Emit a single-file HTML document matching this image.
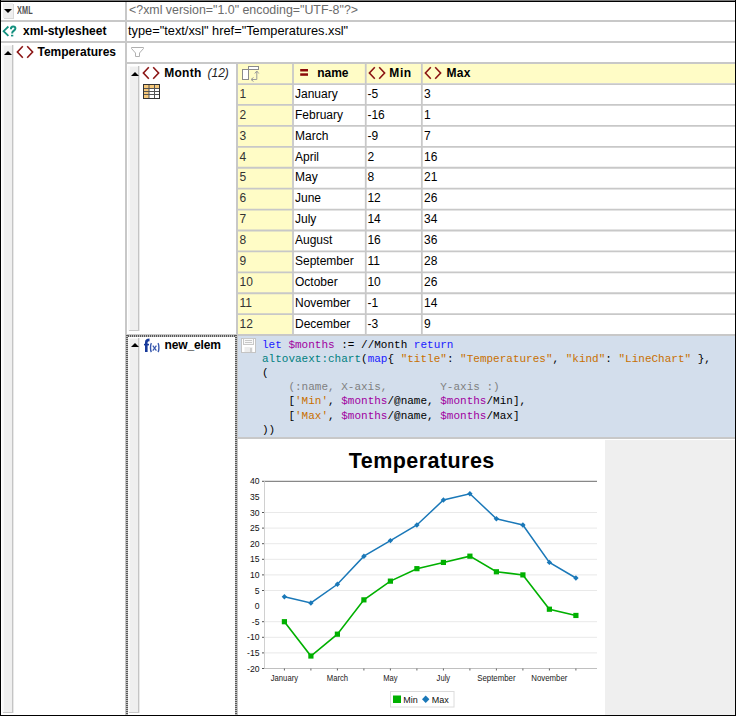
<!DOCTYPE html>
<html><head><meta charset="utf-8"><style>
html,body{margin:0;padding:0;}
body{width:736px;height:716px;position:relative;overflow:hidden;background:#fff;font-family:"Liberation Sans", sans-serif;}
body>div,body>svg{position:absolute;}
</style></head><body>
<div style="left:0px;top:0px;width:736px;height:1px;background:#7a7a7a;"></div>
<div style="left:0px;top:1px;width:736px;height:1px;background:#000;"></div>
<div style="left:0px;top:0px;width:1px;height:716px;background:#000;"></div>
<div style="left:735px;top:0px;width:1px;height:716px;background:#000;"></div>
<div style="left:0px;top:715px;width:736px;height:1px;background:#000;"></div>
<div style="left:1px;top:20px;width:734px;height:2px;background:#c8c8c8;"></div>
<div style="left:1px;top:41px;width:734px;height:2px;background:#c8c8c8;"></div>
<div style="left:125px;top:2px;width:2px;height:713px;background:#c8c8c8;"></div>
<div style="left:3px;top:3px;width:10px;height:15px;background:#efefef;box-shadow:1px 1px 0 #d9d9d9"></div>
<div style="left:4px;top:9px;width:0;height:0;border-left:4px solid transparent;border-right:4px solid transparent;border-top:4px solid #000"></div>
<div style="left:17px;top:0.19px;line-height:20px;font-size:11px;font-weight:bold;font-style:normal;color:#505050;font-family:'Liberation Sans', sans-serif;letter-spacing:0.2px;white-space:pre;transform:scaleX(0.66);transform-origin:0 0">XML</div>
<div style="left:129px;top:-0.30px;line-height:20px;font-size:12.4px;font-weight:normal;font-style:normal;color:#6b6b6b;font-family:'Liberation Sans', sans-serif;letter-spacing:0px;white-space:pre;">&lt;?xml version="1.0" encoding="UTF-8"?&gt;</div>
<svg style="left:0;top:22px" width="20" height="18" viewBox="0 0 20 18"><path d="M8.4 4.5 L3.6 9.2 L8.4 13.8" fill="none" stroke="#15907f" stroke-width="1.8"/><path d="M10.9 7.2 C10.9 5.3 12 4.5 13.1 4.5 C14.5 4.5 15.4 5.4 15.4 6.6 C15.4 8.4 12.2 8.8 12.2 10.9 V11.6" fill="none" stroke="#15907f" stroke-width="2"/><rect x="11" y="12.8" width="2.3" height="1.6" fill="#15907f"/></svg>
<div style="left:23px;top:20.84px;line-height:20px;font-size:12px;font-weight:bold;font-style:normal;color:#000;font-family:'Liberation Sans', sans-serif;letter-spacing:0px;white-space:pre;">xml-stylesheet</div>
<div style="left:128px;top:20.96px;line-height:20px;font-size:12.8px;font-weight:normal;font-style:normal;color:#000;font-family:'Liberation Sans', sans-serif;letter-spacing:0px;white-space:pre;">type="text/xsl" href="Temperatures.xsl"</div>
<div style="left:2px;top:45px;width:12px;height:668px;background:linear-gradient(to right,#f8f8f8 0 2px,#efefef 2px 10px,#c4c4c4 10px 11px,#e9e9e9 11px)"></div>
<div style="left:3px;top:712px;width:10px;height:1px;background:#c8c8c8"></div>
<div style="left:2px;top:45px;width:10px;height:1px;background:#f8f8f8"></div>
<div style="left:4px;top:51px;width:0;height:0;border-left:4.0px solid transparent;border-right:4.0px solid transparent;border-bottom:4px solid #000"></div>
<svg style="left:16px;top:44.8px" width="18" height="14" viewBox="0 0 18 14"><path d="M6.8 1.3 L1.4 7 L6.8 12.7 M11.2 1.3 L16.6 7 L11.2 12.7" fill="none" stroke="#8b1414" stroke-width="1.6"/></svg>
<div style="left:37.5px;top:41.84px;line-height:20px;font-size:12px;font-weight:bold;font-style:normal;color:#000;font-family:'Liberation Sans', sans-serif;letter-spacing:0px;white-space:pre;">Temperatures</div>
<svg style="left:130px;top:46px" width="15" height="12" viewBox="0 0 15 12"><path d="M1.5 1.5 H13.5 V2.5 L9.5 7 V10.5 H5.5 V7 L1.5 2.5 Z" fill="#fff" stroke="#b0b0b0" stroke-width="1"/></svg>
<div style="left:127px;top:62px;width:608px;height:2px;background:#c8c8c8;"></div>
<div style="left:128px;top:66px;width:12px;height:265px;background:linear-gradient(to right,#f8f8f8 0 2px,#efefef 2px 10px,#c4c4c4 10px 11px,#e9e9e9 11px)"></div>
<div style="left:129px;top:330px;width:10px;height:1px;background:#c8c8c8"></div>
<div style="left:128px;top:66px;width:10px;height:1px;background:#f8f8f8"></div>
<div style="left:130.5px;top:71.5px;width:0;height:0;border-left:4.0px solid transparent;border-right:4.0px solid transparent;border-bottom:4.5px solid #000"></div>
<svg style="left:142px;top:66px" width="18" height="14" viewBox="0 0 18 14"><path d="M6.8 1.3 L1.4 7 L6.8 12.7 M11.2 1.3 L16.6 7 L11.2 12.7" fill="none" stroke="#8b1414" stroke-width="1.6"/></svg>
<div style="left:164.2px;top:62.84px;line-height:20px;font-size:12px;font-weight:bold;font-style:normal;color:#000;font-family:'Liberation Sans', sans-serif;letter-spacing:0.3px;white-space:pre;">Month</div>
<div style="left:207.5px;top:62.84px;line-height:20px;font-size:12px;font-weight:normal;font-style:italic;color:#222;font-family:'Liberation Sans', sans-serif;letter-spacing:0px;white-space:pre;">(12)</div>
<svg style="left:143px;top:84px" width="18" height="15" viewBox="0 0 18 15"><rect x="0.5" y="0.5" width="16" height="14" fill="#fff" stroke="#333"/><rect x="1" y="1" width="16" height="3" fill="#f6c87a"/><rect x="1" y="4" width="5" height="10" fill="#f6c87a"/><path d="M0.5 4.5H16.5M0.5 7.5H16.5M0.5 10.5H16.5M6 0.5V14.5M11.5 0.5V14.5" stroke="#555" stroke-width="1"/><rect x="0.5" y="0.5" width="16" height="14" fill="none" stroke="#333"/></svg>
<div style="left:236px;top:63px;width:2px;height:652px;background:#c8c8c8;"></div>
<div style="left:238px;top:64px;width:497px;height:19px;background:#fffcc6;"></div>
<div style="left:238px;top:64px;width:54px;height:271px;background:#fffcc6;"></div>
<svg style="left:0;top:0" width="736" height="716" viewBox="0 0 736 716"><line x1="238" y1="84.05" x2="735" y2="84.05" stroke="#c8c8c8" stroke-width="1.8"/><line x1="238" y1="104.97" x2="735" y2="104.97" stroke="#c8c8c8" stroke-width="1.8"/><line x1="238" y1="125.89" x2="735" y2="125.89" stroke="#c8c8c8" stroke-width="1.8"/><line x1="238" y1="146.81" x2="735" y2="146.81" stroke="#c8c8c8" stroke-width="1.8"/><line x1="238" y1="167.73" x2="735" y2="167.73" stroke="#c8c8c8" stroke-width="1.8"/><line x1="238" y1="188.65" x2="735" y2="188.65" stroke="#c8c8c8" stroke-width="1.8"/><line x1="238" y1="209.57" x2="735" y2="209.57" stroke="#c8c8c8" stroke-width="1.8"/><line x1="238" y1="230.49" x2="735" y2="230.49" stroke="#c8c8c8" stroke-width="1.8"/><line x1="238" y1="251.41" x2="735" y2="251.41" stroke="#c8c8c8" stroke-width="1.8"/><line x1="238" y1="272.33" x2="735" y2="272.33" stroke="#c8c8c8" stroke-width="1.8"/><line x1="238" y1="293.25" x2="735" y2="293.25" stroke="#c8c8c8" stroke-width="1.8"/><line x1="238" y1="314.17" x2="735" y2="314.17" stroke="#c8c8c8" stroke-width="1.8"/><line x1="238" y1="335.09" x2="735" y2="335.09" stroke="#c8c8c8" stroke-width="1.8"/><line x1="293.0" y1="63" x2="293.0" y2="335.09" stroke="#c8c8c8" stroke-width="1.8"/><line x1="365.75" y1="63" x2="365.75" y2="335.09" stroke="#c8c8c8" stroke-width="1.8"/><line x1="421.85" y1="63" x2="421.85" y2="335.09" stroke="#c8c8c8" stroke-width="1.8"/></svg>
<svg style="left:241px;top:65px" width="20" height="18" viewBox="0 0 20 18"><rect x="1.5" y="4.5" width="6" height="10" fill="#fff" stroke="#8a8a8a"/><rect x="7.5" y="1.5" width="10" height="3" fill="#fff" stroke="#8a8a8a"/><path d="M15.8 6.5 V14.5 H10.5" fill="none" stroke="#9a9a9a"/><path d="M13.8 8.5 L15.8 6 L17.8 8.5 M12.5 12.5 L10 14.5 L12.5 16.5" fill="none" stroke="#9a9a9a"/></svg>
<svg style="left:298px;top:66px" width="12" height="12" viewBox="0 0 12 12"><rect x="2.2" y="3" width="7.8" height="2.5" fill="#8b0a0a"/><rect x="2.2" y="7.3" width="7.8" height="2.5" fill="#8b0a0a"/></svg>
<div style="left:317.2px;top:62.84px;line-height:20px;font-size:12px;font-weight:bold;font-style:normal;color:#000;font-family:'Liberation Sans', sans-serif;letter-spacing:0px;white-space:pre;">name</div>
<svg style="left:367.5px;top:66px" width="18" height="14" viewBox="0 0 18 14"><path d="M6.8 1.3 L1.4 7 L6.8 12.7 M11.2 1.3 L16.6 7 L11.2 12.7" fill="none" stroke="#8b1414" stroke-width="1.6"/></svg>
<div style="left:389.3px;top:62.84px;line-height:20px;font-size:12px;font-weight:bold;font-style:normal;color:#000;font-family:'Liberation Sans', sans-serif;letter-spacing:0.6px;white-space:pre;">Min</div>
<svg style="left:423.5px;top:66px" width="18" height="14" viewBox="0 0 18 14"><path d="M6.8 1.3 L1.4 7 L6.8 12.7 M11.2 1.3 L16.6 7 L11.2 12.7" fill="none" stroke="#8b1414" stroke-width="1.6"/></svg>
<div style="left:446.4px;top:62.84px;line-height:20px;font-size:12px;font-weight:bold;font-style:normal;color:#000;font-family:'Liberation Sans', sans-serif;letter-spacing:0.4px;white-space:pre;">Max</div>
<div style="left:239.5px;top:83.74px;line-height:20px;font-size:12px;font-weight:normal;font-style:normal;color:#333;font-family:'Liberation Sans', sans-serif;letter-spacing:0px;white-space:pre;">1</div>
<div style="left:295px;top:83.74px;line-height:20px;font-size:12px;font-weight:normal;font-style:normal;color:#000;font-family:'Liberation Sans', sans-serif;letter-spacing:0px;white-space:pre;">January</div>
<div style="left:367.4px;top:83.74px;line-height:20px;font-size:12px;font-weight:normal;font-style:normal;color:#000;font-family:'Liberation Sans', sans-serif;letter-spacing:0px;white-space:pre;">-5</div>
<div style="left:424px;top:83.74px;line-height:20px;font-size:12px;font-weight:normal;font-style:normal;color:#000;font-family:'Liberation Sans', sans-serif;letter-spacing:0px;white-space:pre;">3</div>
<div style="left:239.5px;top:104.66px;line-height:20px;font-size:12px;font-weight:normal;font-style:normal;color:#333;font-family:'Liberation Sans', sans-serif;letter-spacing:0px;white-space:pre;">2</div>
<div style="left:295px;top:104.66px;line-height:20px;font-size:12px;font-weight:normal;font-style:normal;color:#000;font-family:'Liberation Sans', sans-serif;letter-spacing:0px;white-space:pre;">February</div>
<div style="left:367.4px;top:104.66px;line-height:20px;font-size:12px;font-weight:normal;font-style:normal;color:#000;font-family:'Liberation Sans', sans-serif;letter-spacing:0px;white-space:pre;">-16</div>
<div style="left:424px;top:104.66px;line-height:20px;font-size:12px;font-weight:normal;font-style:normal;color:#000;font-family:'Liberation Sans', sans-serif;letter-spacing:0px;white-space:pre;">1</div>
<div style="left:239.5px;top:125.58px;line-height:20px;font-size:12px;font-weight:normal;font-style:normal;color:#333;font-family:'Liberation Sans', sans-serif;letter-spacing:0px;white-space:pre;">3</div>
<div style="left:295px;top:125.58px;line-height:20px;font-size:12px;font-weight:normal;font-style:normal;color:#000;font-family:'Liberation Sans', sans-serif;letter-spacing:0px;white-space:pre;">March</div>
<div style="left:367.4px;top:125.58px;line-height:20px;font-size:12px;font-weight:normal;font-style:normal;color:#000;font-family:'Liberation Sans', sans-serif;letter-spacing:0px;white-space:pre;">-9</div>
<div style="left:424px;top:125.58px;line-height:20px;font-size:12px;font-weight:normal;font-style:normal;color:#000;font-family:'Liberation Sans', sans-serif;letter-spacing:0px;white-space:pre;">7</div>
<div style="left:239.5px;top:146.50px;line-height:20px;font-size:12px;font-weight:normal;font-style:normal;color:#333;font-family:'Liberation Sans', sans-serif;letter-spacing:0px;white-space:pre;">4</div>
<div style="left:295px;top:146.50px;line-height:20px;font-size:12px;font-weight:normal;font-style:normal;color:#000;font-family:'Liberation Sans', sans-serif;letter-spacing:0px;white-space:pre;">April</div>
<div style="left:367.4px;top:146.50px;line-height:20px;font-size:12px;font-weight:normal;font-style:normal;color:#000;font-family:'Liberation Sans', sans-serif;letter-spacing:0px;white-space:pre;">2</div>
<div style="left:424px;top:146.50px;line-height:20px;font-size:12px;font-weight:normal;font-style:normal;color:#000;font-family:'Liberation Sans', sans-serif;letter-spacing:0px;white-space:pre;">16</div>
<div style="left:239.5px;top:167.42px;line-height:20px;font-size:12px;font-weight:normal;font-style:normal;color:#333;font-family:'Liberation Sans', sans-serif;letter-spacing:0px;white-space:pre;">5</div>
<div style="left:295px;top:167.42px;line-height:20px;font-size:12px;font-weight:normal;font-style:normal;color:#000;font-family:'Liberation Sans', sans-serif;letter-spacing:0px;white-space:pre;">May</div>
<div style="left:367.4px;top:167.42px;line-height:20px;font-size:12px;font-weight:normal;font-style:normal;color:#000;font-family:'Liberation Sans', sans-serif;letter-spacing:0px;white-space:pre;">8</div>
<div style="left:424px;top:167.42px;line-height:20px;font-size:12px;font-weight:normal;font-style:normal;color:#000;font-family:'Liberation Sans', sans-serif;letter-spacing:0px;white-space:pre;">21</div>
<div style="left:239.5px;top:188.34px;line-height:20px;font-size:12px;font-weight:normal;font-style:normal;color:#333;font-family:'Liberation Sans', sans-serif;letter-spacing:0px;white-space:pre;">6</div>
<div style="left:295px;top:188.34px;line-height:20px;font-size:12px;font-weight:normal;font-style:normal;color:#000;font-family:'Liberation Sans', sans-serif;letter-spacing:0px;white-space:pre;">June</div>
<div style="left:367.4px;top:188.34px;line-height:20px;font-size:12px;font-weight:normal;font-style:normal;color:#000;font-family:'Liberation Sans', sans-serif;letter-spacing:0px;white-space:pre;">12</div>
<div style="left:424px;top:188.34px;line-height:20px;font-size:12px;font-weight:normal;font-style:normal;color:#000;font-family:'Liberation Sans', sans-serif;letter-spacing:0px;white-space:pre;">26</div>
<div style="left:239.5px;top:209.26px;line-height:20px;font-size:12px;font-weight:normal;font-style:normal;color:#333;font-family:'Liberation Sans', sans-serif;letter-spacing:0px;white-space:pre;">7</div>
<div style="left:295px;top:209.26px;line-height:20px;font-size:12px;font-weight:normal;font-style:normal;color:#000;font-family:'Liberation Sans', sans-serif;letter-spacing:0px;white-space:pre;">July</div>
<div style="left:367.4px;top:209.26px;line-height:20px;font-size:12px;font-weight:normal;font-style:normal;color:#000;font-family:'Liberation Sans', sans-serif;letter-spacing:0px;white-space:pre;">14</div>
<div style="left:424px;top:209.26px;line-height:20px;font-size:12px;font-weight:normal;font-style:normal;color:#000;font-family:'Liberation Sans', sans-serif;letter-spacing:0px;white-space:pre;">34</div>
<div style="left:239.5px;top:230.18px;line-height:20px;font-size:12px;font-weight:normal;font-style:normal;color:#333;font-family:'Liberation Sans', sans-serif;letter-spacing:0px;white-space:pre;">8</div>
<div style="left:295px;top:230.18px;line-height:20px;font-size:12px;font-weight:normal;font-style:normal;color:#000;font-family:'Liberation Sans', sans-serif;letter-spacing:0px;white-space:pre;">August</div>
<div style="left:367.4px;top:230.18px;line-height:20px;font-size:12px;font-weight:normal;font-style:normal;color:#000;font-family:'Liberation Sans', sans-serif;letter-spacing:0px;white-space:pre;">16</div>
<div style="left:424px;top:230.18px;line-height:20px;font-size:12px;font-weight:normal;font-style:normal;color:#000;font-family:'Liberation Sans', sans-serif;letter-spacing:0px;white-space:pre;">36</div>
<div style="left:239.5px;top:251.10px;line-height:20px;font-size:12px;font-weight:normal;font-style:normal;color:#333;font-family:'Liberation Sans', sans-serif;letter-spacing:0px;white-space:pre;">9</div>
<div style="left:295px;top:251.10px;line-height:20px;font-size:12px;font-weight:normal;font-style:normal;color:#000;font-family:'Liberation Sans', sans-serif;letter-spacing:0px;white-space:pre;">September</div>
<div style="left:367.4px;top:251.10px;line-height:20px;font-size:12px;font-weight:normal;font-style:normal;color:#000;font-family:'Liberation Sans', sans-serif;letter-spacing:0px;white-space:pre;">11</div>
<div style="left:424px;top:251.10px;line-height:20px;font-size:12px;font-weight:normal;font-style:normal;color:#000;font-family:'Liberation Sans', sans-serif;letter-spacing:0px;white-space:pre;">28</div>
<div style="left:239.5px;top:272.02px;line-height:20px;font-size:12px;font-weight:normal;font-style:normal;color:#333;font-family:'Liberation Sans', sans-serif;letter-spacing:0px;white-space:pre;">10</div>
<div style="left:295px;top:272.02px;line-height:20px;font-size:12px;font-weight:normal;font-style:normal;color:#000;font-family:'Liberation Sans', sans-serif;letter-spacing:0px;white-space:pre;">October</div>
<div style="left:367.4px;top:272.02px;line-height:20px;font-size:12px;font-weight:normal;font-style:normal;color:#000;font-family:'Liberation Sans', sans-serif;letter-spacing:0px;white-space:pre;">10</div>
<div style="left:424px;top:272.02px;line-height:20px;font-size:12px;font-weight:normal;font-style:normal;color:#000;font-family:'Liberation Sans', sans-serif;letter-spacing:0px;white-space:pre;">26</div>
<div style="left:239.5px;top:292.94px;line-height:20px;font-size:12px;font-weight:normal;font-style:normal;color:#333;font-family:'Liberation Sans', sans-serif;letter-spacing:0px;white-space:pre;">11</div>
<div style="left:295px;top:292.94px;line-height:20px;font-size:12px;font-weight:normal;font-style:normal;color:#000;font-family:'Liberation Sans', sans-serif;letter-spacing:0px;white-space:pre;">November</div>
<div style="left:367.4px;top:292.94px;line-height:20px;font-size:12px;font-weight:normal;font-style:normal;color:#000;font-family:'Liberation Sans', sans-serif;letter-spacing:0px;white-space:pre;">-1</div>
<div style="left:424px;top:292.94px;line-height:20px;font-size:12px;font-weight:normal;font-style:normal;color:#000;font-family:'Liberation Sans', sans-serif;letter-spacing:0px;white-space:pre;">14</div>
<div style="left:239.5px;top:313.86px;line-height:20px;font-size:12px;font-weight:normal;font-style:normal;color:#333;font-family:'Liberation Sans', sans-serif;letter-spacing:0px;white-space:pre;">12</div>
<div style="left:295px;top:313.86px;line-height:20px;font-size:12px;font-weight:normal;font-style:normal;color:#000;font-family:'Liberation Sans', sans-serif;letter-spacing:0px;white-space:pre;">December</div>
<div style="left:367.4px;top:313.86px;line-height:20px;font-size:12px;font-weight:normal;font-style:normal;color:#000;font-family:'Liberation Sans', sans-serif;letter-spacing:0px;white-space:pre;">-3</div>
<div style="left:424px;top:313.86px;line-height:20px;font-size:12px;font-weight:normal;font-style:normal;color:#000;font-family:'Liberation Sans', sans-serif;letter-spacing:0px;white-space:pre;">9</div>
<div style="left:127px;top:334px;width:608px;height:2px;background:#c8c8c8;"></div>
<div style="left:126px;top:335px;width:111px;height:2px;background:repeating-linear-gradient(to right,#5a5a5a 0 1px,#bdbdbd 1px 2px);"></div>
<div style="left:126px;top:335px;width:2px;height:380px;background:repeating-linear-gradient(to bottom,#5a5a5a 0 1px,#bdbdbd 1px 2px);"></div>
<div style="left:235px;top:335px;width:2px;height:380px;background:repeating-linear-gradient(to bottom,#5a5a5a 0 1px,#bdbdbd 1px 2px);"></div>
<div style="left:128px;top:338px;width:12px;height:375px;background:linear-gradient(to right,#f8f8f8 0 2px,#efefef 2px 10px,#c4c4c4 10px 11px,#e9e9e9 11px)"></div>
<div style="left:129px;top:712px;width:10px;height:1px;background:#c8c8c8"></div>
<div style="left:128px;top:338px;width:10px;height:1px;background:#f8f8f8"></div>
<div style="left:130.5px;top:342.8px;width:0;height:0;border-left:4.0px solid transparent;border-right:4.0px solid transparent;border-bottom:4.5px solid #000"></div>
<svg style="left:140px;top:336px" width="24" height="20" viewBox="0 0 24 20"><path d="M6.3 16 V6.2 C6.3 4.6 7.2 3.9 9.5 3.9" fill="none" stroke="#17399a" stroke-width="2.6"/><path d="M4 8.6 H9" stroke="#17399a" stroke-width="1.6"/><path d="M11.4 7.2 C10.2 9 10.2 14.3 11.4 16" fill="none" stroke="#3556ad" stroke-width="1.4"/><path d="M18 7.2 C19.2 9 19.2 14.3 18 16" fill="none" stroke="#3556ad" stroke-width="1.4"/><path d="M12.8 9.6 L16.4 14.6 M16.4 9.6 L12.8 14.6" stroke="#3556ad" stroke-width="1.2"/></svg>
<div style="left:164.6px;top:335.44px;line-height:20px;font-size:12px;font-weight:bold;font-style:normal;color:#000;font-family:'Liberation Sans', sans-serif;letter-spacing:-0.15px;white-space:pre;">new_elem</div>
<div style="left:238px;top:336px;width:497px;height:101px;background:#d3deec;"></div>
<div style="left:238px;top:437px;width:497px;height:2px;background:#c8c8c8;"></div>
<svg style="left:240px;top:337px" width="18" height="17" viewBox="0 0 18 17"><rect x="1.5" y="1.5" width="14" height="14" fill="#fff" stroke="#c4c4c4"/><rect x="3.5" y="1.5" width="10" height="6" fill="#f8f8f8" stroke="#c8c8c8"/><path d="M5 3.5H12M5 5.5H12" stroke="#c8c8c8"/><rect x="4.5" y="10" width="8" height="5" fill="#ececec"/><rect x="10" y="11" width="2" height="4" fill="#cfcfcf"/></svg>
<div style="left:262px;top:337.67px;line-height:14px;font-size:11px;font-family:'Liberation Mono', monospace;white-space:pre"><span style="color:#1a1aff">let</span><span style="color:#000"> </span><span style="color:#a000a0">$months</span><span style="color:#000"> := //Month </span><span style="color:#1a1aff">return</span></div>
<div style="left:262px;top:351.85px;line-height:14px;font-size:11px;font-family:'Liberation Mono', monospace;white-space:pre"><span style="color:#008080">altovaext:chart</span><span style="color:#000">(</span><span style="color:#1a1aff">map</span><span style="color:#000">{ </span><span style="color:#c87000">"title"</span><span style="color:#000">: </span><span style="color:#c87000">"Temperatures"</span><span style="color:#000">, </span><span style="color:#c87000">"kind"</span><span style="color:#000">: </span><span style="color:#c87000">"LineChart"</span><span style="color:#000"> },</span></div>
<div style="left:262px;top:366.03px;line-height:14px;font-size:11px;font-family:'Liberation Mono', monospace;white-space:pre"><span style="color:#000">(</span></div>
<div style="left:262px;top:380.21px;line-height:14px;font-size:11px;font-family:'Liberation Mono', monospace;white-space:pre"><span style="color:#808080">    (:name, X-axis,        Y-axis :)</span></div>
<div style="left:262px;top:394.39px;line-height:14px;font-size:11px;font-family:'Liberation Mono', monospace;white-space:pre"><span style="color:#000">    [</span><span style="color:#c87000">'Min'</span><span style="color:#000">, </span><span style="color:#a000a0">$months</span><span style="color:#000">/@name, </span><span style="color:#a000a0">$months</span><span style="color:#000">/Min],</span></div>
<div style="left:262px;top:408.57px;line-height:14px;font-size:11px;font-family:'Liberation Mono', monospace;white-space:pre"><span style="color:#000">    [</span><span style="color:#c87000">'Max'</span><span style="color:#000">, </span><span style="color:#a000a0">$months</span><span style="color:#000">/@name, </span><span style="color:#a000a0">$months</span><span style="color:#000">/Max]</span></div>
<div style="left:262px;top:422.75px;line-height:14px;font-size:11px;font-family:'Liberation Mono', monospace;white-space:pre"><span style="color:#000">))</span></div>
<div style="left:238px;top:439px;width:367px;height:276px;background:#fff;"></div>
<div style="left:605px;top:440px;width:130px;height:275px;background:#efefef;"></div>
<svg style="left:0;top:0" width="736" height="716" viewBox="0 0 736 716"><text x="421.75" y="468.4" text-anchor="middle" font-family="Liberation Sans" font-weight="bold" font-size="21.5" letter-spacing="0.45">Temperatures</text><line x1="264.5" y1="668.50" x2="597" y2="668.50" stroke="#e9e9e9" stroke-width="1"/><line x1="262" y1="668.50" x2="264.5" y2="668.50" stroke="#555" stroke-width="1"/><text x="259.5" y="671.60" text-anchor="end" font-family="Liberation Sans" font-size="8.6" fill="#111">-20</text><line x1="264.5" y1="652.90" x2="597" y2="652.90" stroke="#e9e9e9" stroke-width="1"/><line x1="262" y1="652.90" x2="264.5" y2="652.90" stroke="#555" stroke-width="1"/><text x="259.5" y="656.00" text-anchor="end" font-family="Liberation Sans" font-size="8.6" fill="#111">-15</text><line x1="264.5" y1="637.30" x2="597" y2="637.30" stroke="#e9e9e9" stroke-width="1"/><line x1="262" y1="637.30" x2="264.5" y2="637.30" stroke="#555" stroke-width="1"/><text x="259.5" y="640.40" text-anchor="end" font-family="Liberation Sans" font-size="8.6" fill="#111">-10</text><line x1="264.5" y1="621.70" x2="597" y2="621.70" stroke="#e9e9e9" stroke-width="1"/><line x1="262" y1="621.70" x2="264.5" y2="621.70" stroke="#555" stroke-width="1"/><text x="259.5" y="624.80" text-anchor="end" font-family="Liberation Sans" font-size="8.6" fill="#111">-5</text><text x="259.5" y="609.20" text-anchor="end" font-family="Liberation Sans" font-size="8.6" fill="#111">0</text><line x1="264.5" y1="590.50" x2="597" y2="590.50" stroke="#e9e9e9" stroke-width="1"/><line x1="262" y1="590.50" x2="264.5" y2="590.50" stroke="#555" stroke-width="1"/><text x="259.5" y="593.60" text-anchor="end" font-family="Liberation Sans" font-size="8.6" fill="#111">5</text><line x1="264.5" y1="574.90" x2="597" y2="574.90" stroke="#e9e9e9" stroke-width="1"/><line x1="262" y1="574.90" x2="264.5" y2="574.90" stroke="#555" stroke-width="1"/><text x="259.5" y="578.00" text-anchor="end" font-family="Liberation Sans" font-size="8.6" fill="#111">10</text><line x1="264.5" y1="559.30" x2="597" y2="559.30" stroke="#e9e9e9" stroke-width="1"/><line x1="262" y1="559.30" x2="264.5" y2="559.30" stroke="#555" stroke-width="1"/><text x="259.5" y="562.40" text-anchor="end" font-family="Liberation Sans" font-size="8.6" fill="#111">15</text><line x1="264.5" y1="543.70" x2="597" y2="543.70" stroke="#e9e9e9" stroke-width="1"/><line x1="262" y1="543.70" x2="264.5" y2="543.70" stroke="#555" stroke-width="1"/><text x="259.5" y="546.80" text-anchor="end" font-family="Liberation Sans" font-size="8.6" fill="#111">20</text><line x1="264.5" y1="528.10" x2="597" y2="528.10" stroke="#e9e9e9" stroke-width="1"/><line x1="262" y1="528.10" x2="264.5" y2="528.10" stroke="#555" stroke-width="1"/><text x="259.5" y="531.20" text-anchor="end" font-family="Liberation Sans" font-size="8.6" fill="#111">25</text><line x1="264.5" y1="512.50" x2="597" y2="512.50" stroke="#e9e9e9" stroke-width="1"/><line x1="262" y1="512.50" x2="264.5" y2="512.50" stroke="#555" stroke-width="1"/><text x="259.5" y="515.60" text-anchor="end" font-family="Liberation Sans" font-size="8.6" fill="#111">30</text><text x="259.5" y="500.00" text-anchor="end" font-family="Liberation Sans" font-size="8.6" fill="#111">35</text><line x1="262" y1="481.30" x2="264.5" y2="481.30" stroke="#555" stroke-width="1"/><text x="259.5" y="484.40" text-anchor="end" font-family="Liberation Sans" font-size="8.6" fill="#111">40</text><line x1="264.5" y1="481.3" x2="597" y2="481.3" stroke="#888" stroke-width="1.2"/><line x1="264.5" y1="481.3" x2="264.5" y2="668.5" stroke="#d0d0d0" stroke-width="1"/><line x1="264.5" y1="668.5" x2="597" y2="668.5" stroke="#c0c0c0" stroke-width="1"/><line x1="284.40" y1="668.5" x2="284.40" y2="670.5" stroke="#666" stroke-width="1"/><text x="270.80" y="680.5" textLength="27.2" lengthAdjust="spacingAndGlyphs" font-family="Liberation Sans" font-size="8.8" fill="#1a1a1a">January</text><line x1="310.90" y1="668.5" x2="310.90" y2="670.5" stroke="#666" stroke-width="1"/><line x1="337.40" y1="668.5" x2="337.40" y2="670.5" stroke="#666" stroke-width="1"/><text x="326.75" y="680.5" textLength="21.3" lengthAdjust="spacingAndGlyphs" font-family="Liberation Sans" font-size="8.8" fill="#1a1a1a">March</text><line x1="363.90" y1="668.5" x2="363.90" y2="670.5" stroke="#666" stroke-width="1"/><line x1="390.40" y1="668.5" x2="390.40" y2="670.5" stroke="#666" stroke-width="1"/><text x="383.25" y="680.5" textLength="14.3" lengthAdjust="spacingAndGlyphs" font-family="Liberation Sans" font-size="8.8" fill="#1a1a1a">May</text><line x1="416.90" y1="668.5" x2="416.90" y2="670.5" stroke="#666" stroke-width="1"/><line x1="443.40" y1="668.5" x2="443.40" y2="670.5" stroke="#666" stroke-width="1"/><text x="436.60" y="680.5" textLength="13.6" lengthAdjust="spacingAndGlyphs" font-family="Liberation Sans" font-size="8.8" fill="#1a1a1a">July</text><line x1="469.90" y1="668.5" x2="469.90" y2="670.5" stroke="#666" stroke-width="1"/><line x1="496.40" y1="668.5" x2="496.40" y2="670.5" stroke="#666" stroke-width="1"/><text x="477.25" y="680.5" textLength="38.3" lengthAdjust="spacingAndGlyphs" font-family="Liberation Sans" font-size="8.8" fill="#1a1a1a">September</text><line x1="522.90" y1="668.5" x2="522.90" y2="670.5" stroke="#666" stroke-width="1"/><line x1="549.40" y1="668.5" x2="549.40" y2="670.5" stroke="#666" stroke-width="1"/><text x="531.35" y="680.5" textLength="36.1" lengthAdjust="spacingAndGlyphs" font-family="Liberation Sans" font-size="8.8" fill="#1a1a1a">November</text><line x1="575.90" y1="668.5" x2="575.90" y2="670.5" stroke="#666" stroke-width="1"/><polyline points="284.40,596.74 310.90,602.98 337.40,584.26 363.90,556.18 390.40,540.58 416.90,524.98 443.40,500.02 469.90,493.78 496.40,518.74 522.90,524.98 549.40,562.42 575.90,578.02" fill="none" stroke="#1a78b8" stroke-width="1.5"/><polyline points="284.40,621.70 310.90,656.02 337.40,634.18 363.90,599.86 390.40,581.14 416.90,568.66 443.40,562.42 469.90,556.18 496.40,571.78 522.90,574.90 549.40,609.22 575.90,615.46" fill="none" stroke="#00b000" stroke-width="1.6"/><rect x="281.80" y="619.10" width="5.2" height="5.2" fill="#00b000"/><path d="M284.40 594.04 L287.10 596.74 L284.40 599.44 L281.70 596.74 Z" fill="#1a78b8"/><rect x="308.30" y="653.42" width="5.2" height="5.2" fill="#00b000"/><path d="M310.90 600.28 L313.60 602.98 L310.90 605.68 L308.20 602.98 Z" fill="#1a78b8"/><rect x="334.80" y="631.58" width="5.2" height="5.2" fill="#00b000"/><path d="M337.40 581.56 L340.10 584.26 L337.40 586.96 L334.70 584.26 Z" fill="#1a78b8"/><rect x="361.30" y="597.26" width="5.2" height="5.2" fill="#00b000"/><path d="M363.90 553.48 L366.60 556.18 L363.90 558.88 L361.20 556.18 Z" fill="#1a78b8"/><rect x="387.80" y="578.54" width="5.2" height="5.2" fill="#00b000"/><path d="M390.40 537.88 L393.10 540.58 L390.40 543.28 L387.70 540.58 Z" fill="#1a78b8"/><rect x="414.30" y="566.06" width="5.2" height="5.2" fill="#00b000"/><path d="M416.90 522.28 L419.60 524.98 L416.90 527.68 L414.20 524.98 Z" fill="#1a78b8"/><rect x="440.80" y="559.82" width="5.2" height="5.2" fill="#00b000"/><path d="M443.40 497.32 L446.10 500.02 L443.40 502.72 L440.70 500.02 Z" fill="#1a78b8"/><rect x="467.30" y="553.58" width="5.2" height="5.2" fill="#00b000"/><path d="M469.90 491.08 L472.60 493.78 L469.90 496.48 L467.20 493.78 Z" fill="#1a78b8"/><rect x="493.80" y="569.18" width="5.2" height="5.2" fill="#00b000"/><path d="M496.40 516.04 L499.10 518.74 L496.40 521.44 L493.70 518.74 Z" fill="#1a78b8"/><rect x="520.30" y="572.30" width="5.2" height="5.2" fill="#00b000"/><path d="M522.90 522.28 L525.60 524.98 L522.90 527.68 L520.20 524.98 Z" fill="#1a78b8"/><rect x="546.80" y="606.62" width="5.2" height="5.2" fill="#00b000"/><path d="M549.40 559.72 L552.10 562.42 L549.40 565.12 L546.70 562.42 Z" fill="#1a78b8"/><rect x="573.30" y="612.86" width="5.2" height="5.2" fill="#00b000"/><path d="M575.90 575.32 L578.60 578.02 L575.90 580.72 L573.20 578.02 Z" fill="#1a78b8"/><rect x="390.5" y="691.5" width="63.5" height="15.5" fill="#fff" stroke="#dcdcdc"/><rect x="393" y="695.5" width="8" height="7.5" fill="#00b000"/><text x="403.3" y="702.6" font-family="Liberation Sans" font-size="9" fill="#111">Min</text><path d="M425.7 695.5 L429.4 699.2 L425.7 702.9 L422 699.2 Z" fill="#1a78b8"/><text x="431.8" y="702.6" font-family="Liberation Sans" font-size="9" fill="#111">Max</text></svg>
</body></html>
